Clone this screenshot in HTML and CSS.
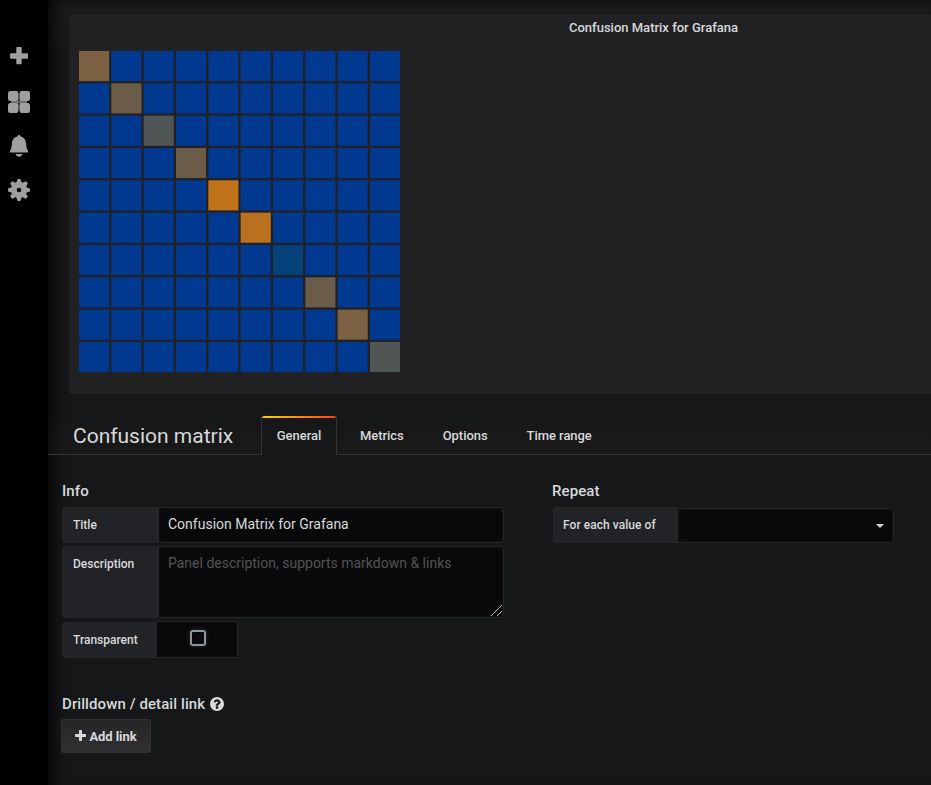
FILE: index.html
```html
<!DOCTYPE html>
<html lang="en">
<head>
<meta charset="utf-8">
<title>Confusion matrix</title>
<link rel="stylesheet" href="styles.css">
</head>
<body>
<div class="app">
  <nav class="sidemenu">
    <a class="side-item side-plus"><svg width="18" height="18" viewBox="0 0 18 18"><path d="M7.2 0h3.6q.9 0 .9.9v5.400h5.400q.9 0 .9.9v3.600q0 .9-.9.900h-5.400v4.600q0 .9-.9.900H7.200q-.9 0-.9-.9v-4.600H1q-.9 0-.9-.9V7.200q0-.9.9-.9h5.300V.9q0-.9.9-.9z"/></svg></a>
    <a class="side-item side-grid"><svg width="22" height="22" viewBox="0 0 22 22"><path opacity=".7" d="M3 3h16v16H3z"/><path class="gap" d="M10.300 2h1.200v8.100h-1.200zM10.300 12h1.200v8h-1.200z"/><rect width="10.400" height="10" rx="2.200"/><rect x="11.600" width="10.400" height="10" rx="2.200"/><rect y="12" width="10.400" height="10" rx="2.200"/><rect x="11.600" y="12" width="10.400" height="10" rx="2.200"/></svg></a>
    <a class="side-item side-bell"><svg width="18" height="22" viewBox="0 0 18 22"><path d="M9 0c.8 0 1.300.5 1.300 1.200 3.600.8 5.600 3.700 5.800 7.200.2 3.300.4 5.200 1.600 6.700.4.500.3 1.200.3 2.300H0c0-1.100-.1-1.800.3-2.300 1.200-1.500 1.400-3.400 1.600-6.700.2-3.500 2.200-6.400 5.800-7.200C7.700.5 8.200 0 9 0zM5.600 19.100h6.800c-.3 1.600-1.700 2.700-3.400 2.700S5.900 20.700 5.600 19.100z"/></svg></a>
    <a class="side-item side-gear"><svg width="22" height="22" viewBox="-11 -11 22 22"><circle r="7.900"/><g id="teeth"><path id="tooth" d="M-2.800-7-1.700-10.300Q-1.500-11-1-11H1Q1.500-11 1.700-10.300L2.800-7z"/><use href="#tooth" transform="rotate(90)"/><use href="#tooth" transform="rotate(180)"/><use href="#tooth" transform="rotate(270)"/></g><use href="#teeth" transform="rotate(45)"/><circle class="hole" r="2.300"/></svg></a>
  </nav>
  <main class="main">
    <section class="panel">
      <h2 class="panel-title">Confusion Matrix for Grafana</h2>
      <svg class="matrix" id="matrix" width="322" height="322"></svg>
    </section>
    <header class="tabs-bar">
      <h1 class="tabs-title">Confusion matrix</h1>
      <ul class="tabs">
        <li class="tab active">General</li>
        <li class="tab">Metrics</li>
        <li class="tab">Options</li>
        <li class="tab">Time range</li>
      </ul>
    </header>
    <div class="editor">
      <section class="info">
        <h3>Info</h3>
        <div class="row title-row"><label class="label">Title</label><input class="field" type="text" value="Confusion Matrix for Grafana"></div>
        <div class="row desc-row"><label class="label">Description</label><textarea class="field" placeholder="Panel description, supports markdown &amp; links"></textarea><svg class="grip" width="11" height="11" viewBox="0 0 11 11"><path d="M0 11 11 0M6 11l5-5"/></svg></div>
        <div class="row trans-row"><label class="label">Transparent</label><div class="switch"><span class="box"></span></div></div>
        <h3 class="drill">Drilldown / detail link <svg width="14" height="14" viewBox="128 128 1536 1536"><path d="M1024 1376v-192q0-14-9-23t-23-9h-192q-14 0-23 9t-9 23v192q0 14 9 23t23 9h192q14 0 23-9t9-23zm256-672q0-88-55.500-163t-138.500-116-170-41q-243 0-371 213-15 24 8 42l132 100q7 6 19 6 16 0 25-12 53-68 86-92 34-24 86-24 48 0 85.500 26t37.500 59q0 38-20 61t-68 45q-63 28-115.500 86.500t-52.500 125.500v36q0 14 9 23t23 9h192q14 0 23-9t9-23q0-19 21.500-49.500t54.500-49.500q32-18 49-28.500t46-35 44.500-48 28-60.500 12.500-81zm384 192q0 209-103 385.500t-279.500 279.500-385.500 103-385.500-103-279.500-279.500-103-385.500 103-385.500 279.500-279.500 385.500-103 385.500 103 279.500 279.500 103 385.500z"/></svg></h3>
        <button class="add"><svg width="11" height="11" viewBox="192 128 1408 1408"><path d="M1600 736v192q0 40-28 68t-68 28h-416v416q0 40-28 68t-68 28h-192q-40 0-68-28t-28-68v-416h-416q-40 0-68-28t-28-68v-192q0-40 28-68t68-28h416v-416q0-40 28-68t68-28h192q40 0 68 28t28 68v416h416q40 0 68 28t28 68z"/></svg><span>Add link</span></button>
      </section>
      <section class="repeat">
        <h3>Repeat</h3>
        <div class="row repeat-row"><label class="label">For each value of</label><div class="select"><span class="caret"></span></div></div>
      </section>
    </div>
  </main>
</div>
<script src="matrix.js"></script>
</body>
</html>
```
FILE: styles.css
```css
* { box-sizing: border-box; }
body { margin: 0; background: #161719; color: #d8d9da; font-family: Roboto, "Liberation Sans", sans-serif; font-size: 14px; overflow: hidden; }
h1, h2, h3, ul { margin: 0; padding: 0; font-weight: 400; }
.app { display: flex; width: 931px; height: 785px; overflow: hidden; }
.sidemenu { width: 48px; flex: none; background: #000; display: flex; flex-direction: column; padding-top: 47px; }
.side-item { width: 38px; height: 44px; display: flex; justify-content: center; align-items: flex-start; }
.side-item svg { fill: #9f9f9f; display: block; }
.side-item .gap, .side-item .hole { fill: #000; }
.main { flex: 1; min-width: 0; overflow: hidden; background: linear-gradient(#141517, #1a1b1d 12px, #161719 60px); box-shadow: inset 18px 0 18px -16px #000; }
.panel { width: 1171px; height: 382px; margin: 13px 0 0 20px; background: #212124; border: 1px solid #141414; border-radius: 3px; padding: 0 10px; }
.panel-title { height: 27px; line-height: 27px; text-align: center; font-size: 13px; font-weight: 500; margin-bottom: 10px; }
.matrix { display: block; }
.tabs-bar { display: flex; height: 60px; border-bottom: 1px solid #333436; padding-left: 25px; background: linear-gradient(transparent 30%, rgba(36, 31, 27, .28)); }
.tabs-title { width: 188px; font-size: 21px; line-height: 26px; padding-top: 28px; }
.tabs { display: flex; list-style: none; padding-top: 21px; }
.tab { height: 38px; line-height: 39px; font-size: 13px; font-weight: 500; margin-right: 39px; letter-spacing: -.05px; }
.tab.active { width: 76px; height: 39px; text-align: center; margin-right: 23px; background: linear-gradient(90deg, #ffd500, #ff4400 99%) top / 100% 2px no-repeat, #161719; border: 1px solid #333436; border-width: 0 1px; border-radius: 3px 3px 0 0; background-origin: border-box; }
.editor { display: flex; padding: 26px 0 0 14px; }
.info { width: 490px; }
h3 { font-size: 15px; font-weight: 500; line-height: 20px; margin-bottom: 6px; letter-spacing: .09px; }
.row { display: flex; width: 442px; margin-bottom: 3px; position: relative; }
.label { width: 96px; flex: none; background: #212327; border: 1px solid #262628; border-radius: 3px 0 0 3px; padding: 0 10px; font-size: 12px; font-weight: 500; line-height: 35px; }
.field { flex: 1; display: block; margin: 0; border: 1px solid #262628; border-radius: 0 3px 3px 0; background: #09090b; color: #d8d9da; font: 14px Roboto, sans-serif; padding: 8px 9px; box-shadow: inset 0 0 4px #161719; outline: 0; resize: none; }
.field::placeholder { color: #535355; opacity: 1; }
.title-row { height: 36px; }
.title-row .field { padding: 5px 9px 7px; }
.desc-row { height: 72px; }
.grip { position: absolute; right: 2px; bottom: 2px; fill: none; stroke: #d8d9da; stroke-width: .9; }
.trans-row { height: 37px; align-items: flex-end; margin-bottom: 36px; }
.trans-row .label { width: 95px; height: 36px; }
.switch { width: 81px; height: 37px; background: #09090b; border: 1px solid #262628; border-left: 0; display: flex; justify-content: center; padding: 8px 0 0 1px; }
.box { width: 16px; height: 16px; border: 2px solid #8e979d; border-radius: 3px; box-shadow: 0 0 4px #333; }
.drill { display: flex; align-items: center; gap: 5px; margin-bottom: 5px; }
svg { fill: #d8d9da; }
.add { width: 90px; height: 34px; margin-left: -1px; display: flex; align-items: center; justify-content: center; gap: 3px; border: 1px solid #323234; border-radius: 2px; background: linear-gradient(#262628, #303032); color: #d8d9da; font: 700 13px Roboto, sans-serif; letter-spacing: -.08px; padding: 0; }
.add svg { margin-bottom: 1px; }
.repeat { width: 342px; }
.repeat-row { width: 342px; height: 36px; align-items: flex-end; }
.repeat-row .label { width: 125px; height: 36px; margin-left: 1px; padding-left: 9px; letter-spacing: .05px; }
.select { width: 217px; height: 35px; margin-left: -1px; flex: 1; border: 1px solid #262628; border-radius: 0 3px 3px 0; background: #09090b; box-shadow: inset 0 0 4px #161719; display: flex; align-items: center; justify-content: flex-end; padding-right: 9px; }
.caret { border: 4px solid transparent; border-top-color: #d8d9da; border-bottom: 0; }
```
FILE: matrix.js
```js
const size = 10;
const pitch = 32.33;
const diagonal = ['#7b6142', '#6a5c48', '#505656', '#6a5c48', '#c0731b', '#b9711f', '#06427a', '#6a5c48', '#7b6142', '#505656'];
const svg = document.getElementById('matrix');

for (let row = 0; row < size; row++) {
  for (let col = 0; col < size; col++) {
    const cell = document.createElementNS('http://www.w3.org/2000/svg', 'rect');
    cell.setAttribute('x', col * pitch);
    cell.setAttribute('y', row * pitch);
    cell.setAttribute('width', 30.1);
    cell.setAttribute('height', 30.1);
    cell.setAttribute('fill', row === col ? diagonal[row] : '#00398f');
    svg.appendChild(cell);
  }
}
```
